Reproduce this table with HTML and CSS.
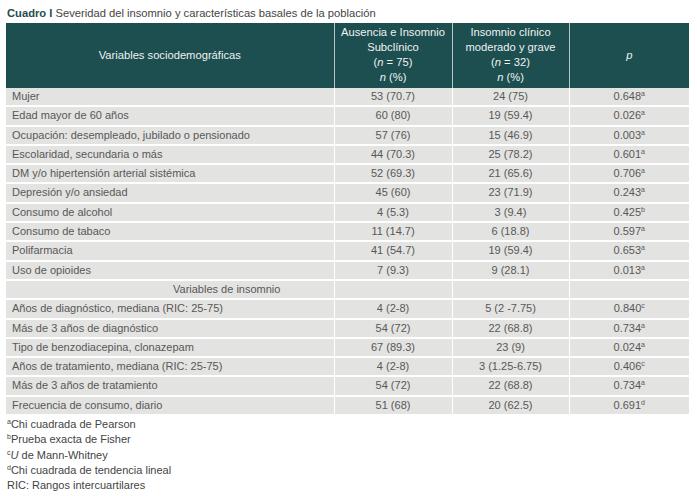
FILE: index.html
```html
<!DOCTYPE html>
<html lang="es">
<head>
<meta charset="utf-8">
<link rel="stylesheet" href="styles.css">
</head>
<body>
<div class="page">
  <p class="caption"><b>Cuadro I</b> Severidad del insomnio y características basales de la población</p>
  <table class="data">
    <colgroup>
      <col class="c1"><col class="c2"><col class="c3"><col class="c4">
    </colgroup>
    <thead>
      <tr>
        <th>Variables sociodemográficas</th>
        <th>Ausencia e Insomnio Subclínico<br>(<i>n</i> = 75)<br><i>n</i> (%)</th>
        <th>Insomnio clínico moderado y grave<br>(<i>n</i> = 32)<br><i>n</i> (%)</th>
        <th><i>p</i></th>
      </tr>
    </thead>
    <tbody>
      <tr><td>Mujer</td><td>53 (70.7)</td><td>24 (75)</td><td>0.648<sup>a</sup></td></tr>
      <tr><td>Edad mayor de 60 años</td><td>60 (80)</td><td>19 (59.4)</td><td>0.026<sup>a</sup></td></tr>
      <tr><td>Ocupación: desempleado, jubilado o pensionado</td><td>57 (76)</td><td>15 (46.9)</td><td>0.003<sup>a</sup></td></tr>
      <tr><td>Escolaridad, secundaria o más</td><td>44 (70.3)</td><td>25 (78.2)</td><td>0.601<sup>a</sup></td></tr>
      <tr><td>DM y/o hipertensión arterial sistémica</td><td>52 (69.3)</td><td>21 (65.6)</td><td>0.706<sup>a</sup></td></tr>
      <tr><td>Depresión y/o ansiedad</td><td>45 (60)</td><td>23 (71.9)</td><td>0.243<sup>a</sup></td></tr>
      <tr><td>Consumo de alcohol</td><td>4 (5.3)</td><td>3 (9.4)</td><td>0.425<sup>b</sup></td></tr>
      <tr><td>Consumo de tabaco</td><td>11 (14.7)</td><td>6 (18.8)</td><td>0.597<sup>a</sup></td></tr>
      <tr><td>Polifarmacia</td><td>41 (54.7)</td><td>19 (59.4)</td><td>0.653<sup>a</sup></td></tr>
      <tr><td>Uso de opioides</td><td>7 (9.3)</td><td>9 (28.1)</td><td>0.013<sup>a</sup></td></tr>
      <tr class="section"><td>Variables de insomnio</td><td></td><td></td><td></td></tr>
      <tr><td>Años de diagnóstico, mediana (RIC: 25-75)</td><td>4 (2-8)</td><td>5 (2 -7.75)</td><td>0.840<sup>c</sup></td></tr>
      <tr><td>Más de 3 años de diagnóstico</td><td>54 (72)</td><td>22 (68.8)</td><td>0.734<sup>a</sup></td></tr>
      <tr><td>Tipo de benzodiacepina, clonazepam</td><td>67 (89.3)</td><td>23 (9)</td><td>0.024<sup>a</sup></td></tr>
      <tr><td>Años de tratamiento, mediana (RIC: 25-75)</td><td>4 (2-8)</td><td>3 (1.25-6.75)</td><td>0.406<sup>c</sup></td></tr>
      <tr><td>Más de 3 años de tratamiento</td><td>54 (72)</td><td>22 (68.8)</td><td>0.734<sup>a</sup></td></tr>
      <tr><td>Frecuencia de consumo, diario</td><td>51 (68)</td><td>20 (62.5)</td><td>0.691<sup>d</sup></td></tr>
    </tbody>
  </table>
  <ul class="notes">
    <li><sup>a</sup>Chi cuadrada de Pearson</li>
    <li><sup>b</sup>Prueba exacta de Fisher</li>
    <li><sup>c</sup><i>U</i> de Mann-Whitney</li>
    <li><sup>d</sup>Chi cuadrada de tendencia lineal</li>
    <li>RIC: Rangos intercuartilares</li>
  </ul>
</div>
</body>
</html>
```

FILE: styles.css
```css
html, body {
  margin: 0;
  padding: 0;
  background: #ffffff;
}

.page {
  padding: 6px 0 0 6px;
  font-family: "Liberation Sans", Arial, sans-serif;
  font-size: 11px;
  color: #585858;
}

.caption {
  margin: 0 0 3px 1px;
  font-size: 11.2px;
  line-height: 14px;
  color: #444444;
}

.caption b {
  color: #1d4e50;
}

.data {
  width: 683px;
  border-collapse: collapse;
  table-layout: fixed;
}

.c1 { width: 328px; }
.c2 { width: 118px; }
.c3 { width: 117px; }
.c4 { width: 120px; }

.data th {
  background: #1d4e50;
  color: #eef2f1;
  font-weight: normal;
  font-size: 11.2px;
  line-height: 15px;
  padding: 2px 2px 3px;
  height: 60px;
  border-left: 1px solid #b9c4c3;
  text-align: center;
  vertical-align: middle;
}

.data th:first-child {
  border-left: none;
}

.data td {
  background: #e3e3e1;
  line-height: 15.3px;
  padding: 1px 6px;
  border-top: 2px solid #ffffff;
  border-left: 1px solid #ffffff;
  text-align: center;
  white-space: nowrap;
}

.data td:first-child {
  text-align: left;
  border-left: none;
  padding-left: 6px;
}

.data tbody tr:first-child td {
  border-top: none;
}

.data tr.section td:first-child {
  padding-left: 167px;
}

sup {
  font-size: 7px;
  line-height: 0;
  vertical-align: 4px;
}

.notes {
  list-style: none;
  margin: 3px 0 0 1px;
  padding: 0;
  font-size: 11px;
  line-height: 15.3px;
  color: #444444;
}
```
